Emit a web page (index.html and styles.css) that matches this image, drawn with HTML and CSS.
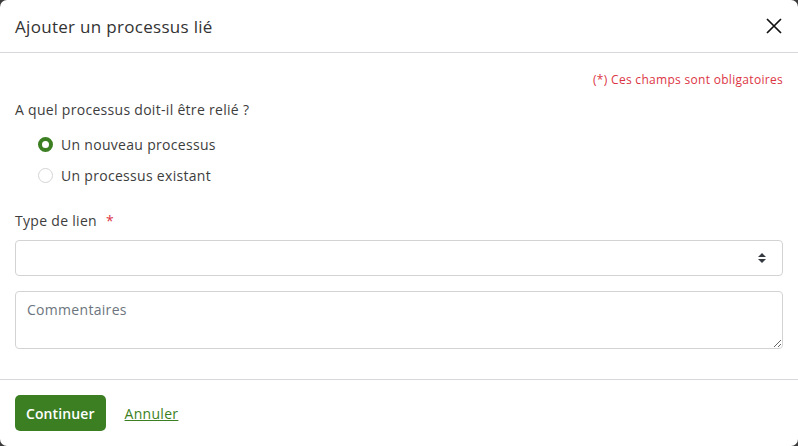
FILE: index.html
```html
<!DOCTYPE html>
<html lang="fr">
<head>
    <meta charset="UTF-8">
    <meta name="viewport" content="width=device-width, initial-scale=1.0">
    <title>Ajouter un processus lié</title>
    <link rel="stylesheet" href="styles.css">
</head>
<body>
    <div class="modal">
        <div class="modal-header">
            <h2 class="modal-title">Ajouter un processus lié</h2>
            <button class="close-btn" type="button" aria-label="Fermer">
                <svg width="16" height="16" viewBox="0 0 16 16">
                    <path d="M1 1 L15 15 M15 1 L1 15" stroke="#111" stroke-width="1.7" fill="none"/>
                </svg>
            </button>
        </div>

        <form class="modal-body">
            <p class="required-note">(*) Ces champs sont obligatoires</p>

            <p class="question">A quel processus doit-il être relié ?</p>

            <div class="radio-group">
                <label class="radio-row">
                    <input type="radio" name="target" checked>
                    <span class="radio-mark"></span>
                    Un nouveau processus
                </label>
                <label class="radio-row">
                    <input type="radio" name="target">
                    <span class="radio-mark"></span>
                    Un processus existant
                </label>
            </div>

            <label class="field-label" for="linkType">Type de lien <span class="star">*</span></label>
            <div class="select-wrap">
                <select id="linkType" class="form-control"></select>
                <svg class="select-arrows" width="10" height="12" viewBox="0 0 10 12">
                    <path d="M1 5 L5 1 L9 5 Z M1 7 L5 11 L9 7 Z" fill="#343a40"/>
                </svg>
            </div>

            <textarea class="form-control comments" placeholder="Commentaires"></textarea>
        </form>

        <div class="modal-footer">
            <button class="btn-primary" type="button">Continuer</button>
            <a href="#" class="cancel-link">Annuler</a>
        </div>
    </div>
</body>
</html>
```

FILE: styles.css
```css
* {
    box-sizing: border-box;
}

body {
    margin: 0;
    background: #3b3b3b;
    font-family: 'Open Sans', 'Noto Sans', sans-serif;
    letter-spacing: 0.3px;
    color: #3d3d3d;
}

.modal {
    width: 798px;
    height: 446px;
    background: #fff;
    border-radius: 7px;
    display: flex;
    flex-direction: column;
    overflow: hidden;
}

.modal-header {
    height: 53px;
    padding: 0 15px;
    border-bottom: 1px solid #d7d7dc;
    display: flex;
    align-items: center;
    justify-content: space-between;
}

.modal-title {
    margin: 0;
    font-size: 17px;
    font-weight: 500;
    color: #333;
}

.close-btn {
    background: none;
    border: none;
    padding: 0;
    margin-right: 1px;
    cursor: pointer;
    display: flex;
}

.modal-body {
    flex: 1;
    padding: 18px 15px 0;
}

.required-note {
    margin: 0;
    text-align: right;
    font-size: 12px;
    color: #dc3545;
}

.question {
    margin: 12px 0 0;
    font-size: 14px;
}

.radio-group {
    padding: 16px 0 0 23px;
    display: flex;
    flex-direction: column;
    gap: 12px;
}

.radio-row {
    display: flex;
    align-items: center;
    gap: 8px;
    font-size: 14px;
    cursor: pointer;
}

.radio-row input {
    display: none;
}

.radio-mark {
    width: 15px;
    height: 15px;
    border-radius: 50%;
    border: 1px solid #d4d4d4;
    background: #fff;
}

.radio-row input:checked + .radio-mark {
    border: 4px solid #3b7f22;
}

.field-label {
    display: block;
    margin-top: 26px;
    font-size: 14px;
}

.star {
    color: #dc3545;
    margin-left: 5px;
}

.select-wrap {
    position: relative;
    margin-top: 10px;
}

.form-control {
    display: block;
    width: 100%;
    border: 1px solid #d3d3d3;
    border-radius: 4px;
    background: #fff;
    font-family: inherit;
    font-size: 14px;
    letter-spacing: inherit;
    color: #3d3d3d;
}

select.form-control {
    height: 36px;
    appearance: none;
}

.select-arrows {
    position: absolute;
    right: 16px;
    top: 12px;
}

.comments {
    margin-top: 15px;
    height: 58px;
    padding: 8px 11px;
    resize: vertical;
}

.comments::placeholder {
    color: #6c757d;
}

.modal-footer {
    height: 67px;
    border-top: 1px solid #d7d7dc;
    padding: 0 15px;
    display: flex;
    align-items: center;
    gap: 19px;
}

.btn-primary {
    background: #3b7f22;
    color: #fff;
    border: none;
    border-radius: 5px;
    height: 36px;
    padding: 0 11px;
    font-family: inherit;
    font-size: 14px;
    font-weight: 600;
    letter-spacing: 0.1px;
    cursor: pointer;
}

.cancel-link {
    color: #3b7f22;
    font-size: 14px;
}
```
